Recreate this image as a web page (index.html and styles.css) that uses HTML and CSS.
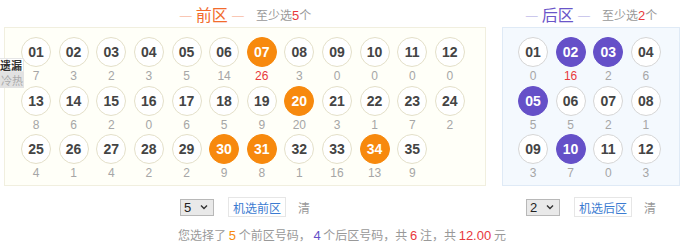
FILE: index.html
```html
<!DOCTYPE html>
<html lang="zh-CN">
<head>
<meta charset="utf-8">
<link rel="stylesheet" href="styles.css">
</head>
<body>
<div class="wrap">
  <div class="tabs">
    <div class="tab tab-on">遗漏</div>
    <div class="tab tab-off">冷热</div>
  </div>
  <div class="cols">
    <section class="col col-front">
      <div class="head">
        <span class="title title-front">— <b>前区</b> —</span>
        <span class="tip">至少选<em>5</em>个</span>
      </div>
      <div class="panel panel-front">
        <div class="grid grid-front">
          <div class="cell"><span class="ball">01</span><span class="miss">7</span></div>
          <div class="cell"><span class="ball">02</span><span class="miss">3</span></div>
          <div class="cell"><span class="ball">03</span><span class="miss">2</span></div>
          <div class="cell"><span class="ball">04</span><span class="miss">3</span></div>
          <div class="cell"><span class="ball">05</span><span class="miss">5</span></div>
          <div class="cell"><span class="ball">06</span><span class="miss">14</span></div>
          <div class="cell"><span class="ball on-front">07</span><span class="miss hot">26</span></div>
          <div class="cell"><span class="ball">08</span><span class="miss">3</span></div>
          <div class="cell"><span class="ball">09</span><span class="miss">0</span></div>
          <div class="cell"><span class="ball">10</span><span class="miss">0</span></div>
          <div class="cell"><span class="ball">11</span><span class="miss">0</span></div>
          <div class="cell"><span class="ball">12</span><span class="miss">0</span></div>
          <div class="cell"><span class="ball">13</span><span class="miss">8</span></div>
          <div class="cell"><span class="ball">14</span><span class="miss">6</span></div>
          <div class="cell"><span class="ball">15</span><span class="miss">2</span></div>
          <div class="cell"><span class="ball">16</span><span class="miss">0</span></div>
          <div class="cell"><span class="ball">17</span><span class="miss">6</span></div>
          <div class="cell"><span class="ball">18</span><span class="miss">5</span></div>
          <div class="cell"><span class="ball">19</span><span class="miss">9</span></div>
          <div class="cell"><span class="ball on-front">20</span><span class="miss">20</span></div>
          <div class="cell"><span class="ball">21</span><span class="miss">3</span></div>
          <div class="cell"><span class="ball">22</span><span class="miss">1</span></div>
          <div class="cell"><span class="ball">23</span><span class="miss">7</span></div>
          <div class="cell"><span class="ball">24</span><span class="miss">2</span></div>
          <div class="cell"><span class="ball">25</span><span class="miss">4</span></div>
          <div class="cell"><span class="ball">26</span><span class="miss">1</span></div>
          <div class="cell"><span class="ball">27</span><span class="miss">4</span></div>
          <div class="cell"><span class="ball">28</span><span class="miss">2</span></div>
          <div class="cell"><span class="ball">29</span><span class="miss">2</span></div>
          <div class="cell"><span class="ball on-front">30</span><span class="miss">9</span></div>
          <div class="cell"><span class="ball on-front">31</span><span class="miss">8</span></div>
          <div class="cell"><span class="ball">32</span><span class="miss">1</span></div>
          <div class="cell"><span class="ball">33</span><span class="miss">16</span></div>
          <div class="cell"><span class="ball on-front">34</span><span class="miss">13</span></div>
          <div class="cell"><span class="ball">35</span><span class="miss">9</span></div>
        </div>
      </div>
      <div class="ctrl">
        <span class="sel">5<svg class="chev" viewBox="0 0 8 6" width="8" height="6"><path d="M1 1.5 L4 4.5 L7 1.5" fill="none" stroke="#333" stroke-width="1.4"/></svg></span>
        <span class="btn">机选前区</span>
        <span class="clr">清</span>
      </div>
    </section>
    <section class="col col-back">
      <div class="head">
        <span class="title title-back">— <b>后区</b> —</span>
        <span class="tip">至少选<em>2</em>个</span>
      </div>
      <div class="panel panel-back">
        <div class="grid grid-back">
          <div class="cell"><span class="ball">01</span><span class="miss">0</span></div>
          <div class="cell"><span class="ball on-back">02</span><span class="miss hot">16</span></div>
          <div class="cell"><span class="ball on-back">03</span><span class="miss">2</span></div>
          <div class="cell"><span class="ball">04</span><span class="miss">6</span></div>
          <div class="cell"><span class="ball on-back">05</span><span class="miss">5</span></div>
          <div class="cell"><span class="ball">06</span><span class="miss">5</span></div>
          <div class="cell"><span class="ball">07</span><span class="miss">2</span></div>
          <div class="cell"><span class="ball">08</span><span class="miss">1</span></div>
          <div class="cell"><span class="ball">09</span><span class="miss">3</span></div>
          <div class="cell"><span class="ball on-back">10</span><span class="miss">7</span></div>
          <div class="cell"><span class="ball">11</span><span class="miss">0</span></div>
          <div class="cell"><span class="ball">12</span><span class="miss">3</span></div>
        </div>
      </div>
      <div class="ctrl">
        <span class="sel">2<svg class="chev" viewBox="0 0 8 6" width="8" height="6"><path d="M1 1.5 L4 4.5 L7 1.5" fill="none" stroke="#333" stroke-width="1.4"/></svg></span>
        <span class="btn">机选后区</span>
        <span class="clr">清</span>
      </div>
    </section>
  </div>
  <p class="summary">您选择了 <em class="c-front">5</em> 个前区号码， <em class="c-back">4</em> 个后区号码，共 <em class="c-red">6</em> 注，共 <em class="c-red">12.00</em> 元</p>
</div>
</body>
</html>
```

FILE: styles.css
```css
* { box-sizing: border-box; }
html, body { margin: 0; padding: 0; background: #fff; }
body {
  font-family: "Liberation Sans", "Noto Sans CJK SC", Arial, sans-serif;
  color: #333;
  width: 690px;
  height: 251px;
  overflow: hidden;
}
.wrap { position: relative; width: 690px; }
.cols { display: flex; gap: 16px; margin-left: 4px; }
.col-front { width: 482px; }
.col-back { width: 178px; }

.head {
  height: 27px;
  display: flex;
  align-items: center;
  justify-content: center;
  gap: 11px;
  padding-top: 1px;
}
.title { font-size: 14px; font-family: "Noto Sans CJK SC", sans-serif; }
.title b { font-weight: normal; font-size: 16px; }
.title-front { color: #f6a07a; }
.title-front b { color: #f26b2c; }
.title-back { color: #a99ee0; }
.title-back b { color: #6a55c9; }
.tip { font-size: 12px; color: #999; font-family: "Noto Sans CJK SC", sans-serif; }
.tip em { font-style: normal; color: #e8393c; font-family: "Liberation Sans", sans-serif; font-size: 13px; }

.panel { border: 1px solid; padding: 9px 0 2px 16px; }
.panel-front { background: #fffff8; border-color: #f1efdf; }
.panel-back { background: #f4f9fe; border-color: #dfeaf6; padding-left: 15px; }

.grid { display: grid; column-gap: 7.64px; grid-auto-rows: 48.7px; }
.grid-front { grid-template-columns: repeat(12, 30px); }
.grid-back { grid-template-columns: repeat(4, 30px); }
.cell { display: flex; flex-direction: column; align-items: center; }
.ball {
  width: 30px; height: 30px;
  border-radius: 50%;
  background: #fff;
  border: 1px solid #e4e0c9;
  display: flex; align-items: center; justify-content: center;
  font-weight: bold;
  font-size: 14px;
  color: #444;
}
.grid-back .ball { border-color: #d6d6d6; }
.ball.on-front { background: #f7890d; border-color: #f7890d; color: #fff; }
.ball.on-back { background: #6550c8; border-color: #6550c8; color: #fff; }
.miss { height: 18.7px; line-height: 19px; font-size: 12px; color: #a6a6a6; }
.miss.hot { color: #e8393c; }

.tabs { position: absolute; left: 0; top: 58px; width: 24px; z-index: 2; }
.tab {
  font-size: 11px;
  font-family: "Noto Sans CJK SC", sans-serif;
  white-space: nowrap; overflow: hidden;
  text-align: right;
  padding-right: 1px;
}
.tab-on { height: 14px; line-height: 13px; background: #fff; color: #333; font-weight: bold; border: 1px solid #e6e6e6; border-left: 0; }
.tab-off { height: 16px; line-height: 16px; background: #e2e2e2; color: #aaa; }

.ctrl {
  margin-top: 11px;
  height: 20px;
  display: flex;
  align-items: center;
  justify-content: center;
}
.sel {
  width: 34px; height: 17px;
  background: #e9e9e9;
  border: 1px solid #b8b8b8;
  font-size: 13px;
  color: #222;
  display: flex; align-items: center; justify-content: space-between;
  padding: 0 5px 0 3px;
  margin-right: 14px;
}
.chev { display: block; }
.btn {
  width: 58px; height: 20px;
  border: 1px solid #e6e6e6;
  background: #fff;
  color: #3b7bd1;
  font-size: 12px;
  font-family: "Noto Sans CJK SC", sans-serif;
  display: flex; align-items: center; justify-content: center;
  margin-right: 12px;
}
.clr { font-size: 12px; color: #999; font-family: "Noto Sans CJK SC", sans-serif; }

.summary {
  margin: 8px 0 0 4px;
  width: 676px;
  text-align: center;
  font-size: 12px;
  line-height: 19px;
  color: #999;
  font-family: "Noto Sans CJK SC", sans-serif;
}
.summary em { font-style: normal; font-family: "Liberation Sans", sans-serif; font-size: 13px; }
.c-front { color: #f7890d; }
.c-back { color: #6550c8; }
.c-red { color: #e8393c; }
```
